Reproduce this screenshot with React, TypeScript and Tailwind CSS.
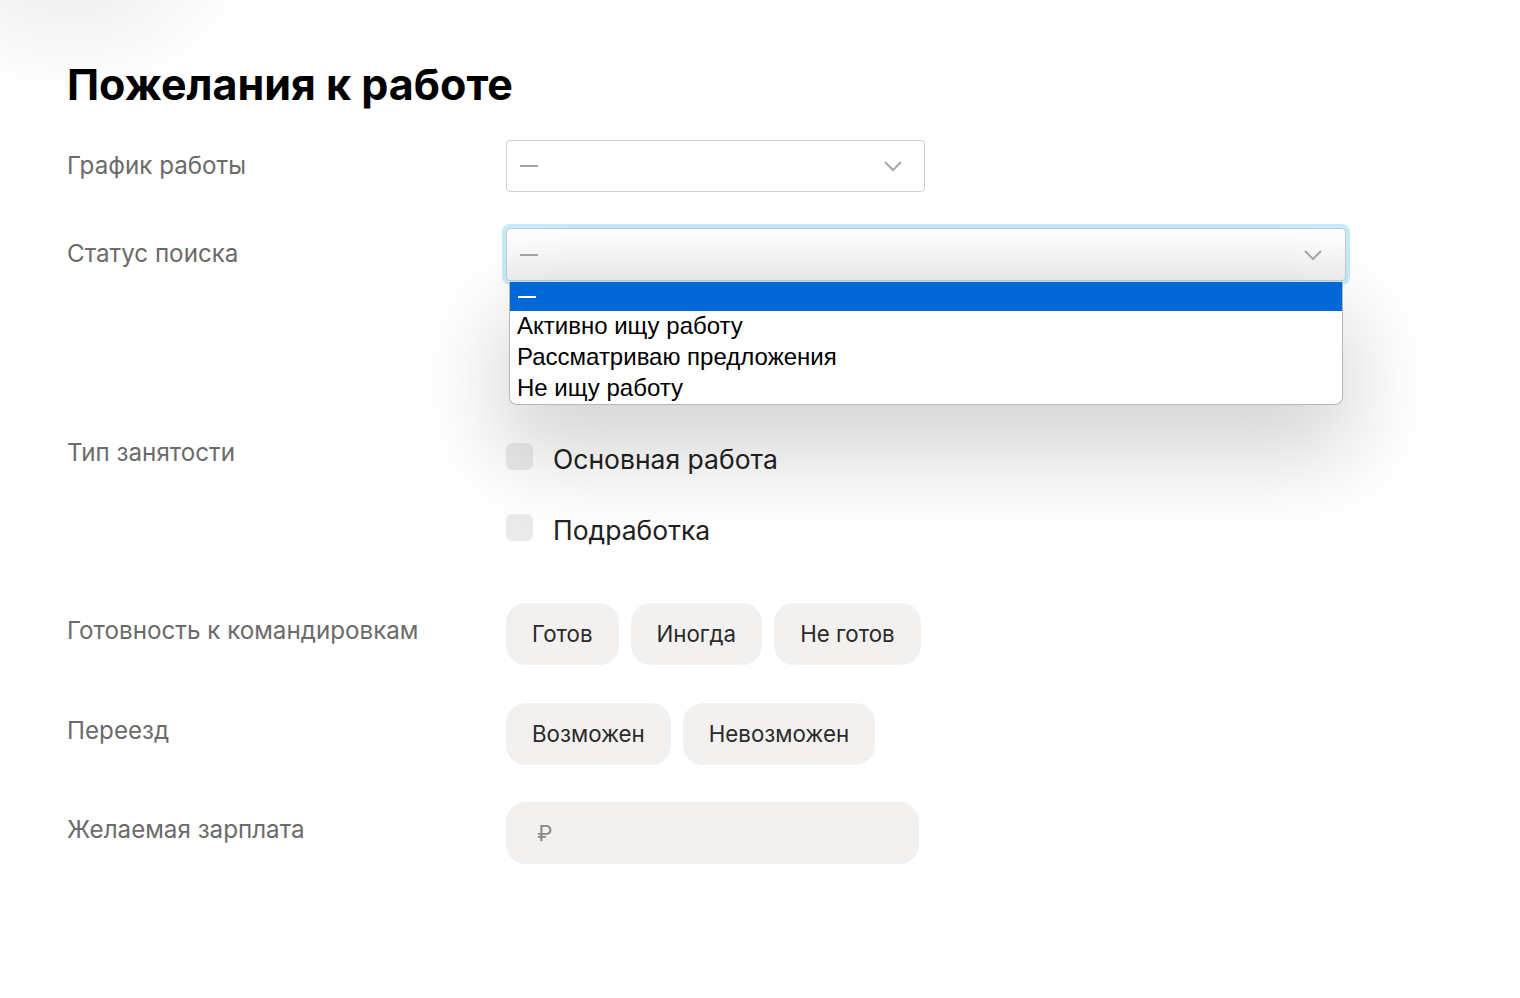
import * as React from 'react'

const labelCls = 'w-[439px] shrink-0 text-[24.2px] text-[#6b6b6b]'
const chipCls =
  'h-[62px] rounded-[20px] bg-[#f2f1f0] px-[26px] text-[22.3px] text-[#2a2a2a] flex items-center'

function Chevron() {
  return (
    <svg width="20" height="12" viewBox="0 0 20 12" fill="none">
      <polyline points="2,2 10,10 18,2" stroke="#a8a8a8" strokeWidth="2" />
    </svg>
  )
}

function Dash({ className }: { className?: string }) {
  return <span className={'block h-[2px] w-[18px] ' + className} />
}

const statusOptions = ['Активно ищу работу', 'Рассматриваю предложения', 'Не ищу работу']

export default function App() {
  return (
    <div
      className="relative min-h-[998px] w-[1520px] overflow-hidden bg-white pl-[67px] pt-[58px]"
      style={{ fontFamily: 'Inter, "Noto Sans", sans-serif' }}
    >
      <div className="pointer-events-none absolute -left-[120px] -top-[160px] h-[260px] w-[380px] rounded-full bg-[radial-gradient(closest-side,rgba(0,0,0,0.07),rgba(0,0,0,0))]" />

      <h1 className="text-[43px] font-bold leading-[52px] text-black">Пожелания к работе</h1>

      {/* График работы */}
      <div className="mt-[30px] flex items-center">
        <div className={labelCls}>График работы</div>
        <div className="flex h-[52px] w-[419px] items-center justify-between rounded-[4px] border border-[#cfcfcf] bg-white pl-[13px] pr-[21px]">
          <Dash className="bg-[#a5a5a5]" />
          <Chevron />
        </div>
      </div>

      {/* Статус поиска */}
      <div className="mt-[36px] flex items-center">
        <div className={labelCls}>Статус поиска</div>
        <div className="relative">
          <div className="-m-[4px] rounded-[8px] bg-[#c4ebfb] p-[4px]">
            <div className="flex h-[53px] w-[840px] items-center justify-between rounded-[4px] border border-[#c8c8c8] bg-gradient-to-b from-white to-[#f0f0f0] pl-[13px] pr-[22px]">
              <Dash className="bg-[#a5a5a5]" />
              <Chevron />
            </div>
          </div>
          <div
            className="absolute left-[3px] top-[54px] z-10 w-[834px] overflow-hidden rounded-b-[8px] border border-t-0 border-[#b5b5b5] bg-white shadow-[0_40px_90px_10px_rgba(0,0,0,0.17)]"
            style={{ fontFamily: '"Liberation Sans", Arial, sans-serif' }}
          >
            <div className="flex h-[29px] items-center bg-[#0067d6] px-[8px]">
              <Dash className="bg-white" />
            </div>
            {statusOptions.map((o) => (
              <div key={o} className="h-[31px] px-[7px] text-[24px] leading-[29px] text-black">
                {o}
              </div>
            ))}
          </div>
        </div>
      </div>

      {/* Тип занятости */}
      <div className="mt-[159px] flex items-start">
        <div className={labelCls + ' -mt-[5px]'}>Тип занятости</div>
        <div className="flex flex-col gap-[38px]">
          {['Основная работа', 'Подработка'].map((t) => (
            <label key={t} className="flex items-center gap-[20px] text-[26.5px] leading-[27px] text-[#222]">
              <span className="h-[27px] w-[27px] rounded-[6px] bg-[#ebebeb]" />
              <span className="mt-[6px]">{t}</span>
            </label>
          ))}
        </div>
      </div>

      {/* Готовность к командировкам */}
      <div className="mt-[59px] flex items-center">
        <div className={labelCls + ' -mt-[6px]'}>Готовность к командировкам</div>
        <div className="flex gap-[12px]">
          <button className={chipCls}>Готов</button>
          <button className={chipCls}>Иногда</button>
          <button className={chipCls}>Не готов</button>
        </div>
      </div>

      {/* Переезд */}
      <div className="mt-[38px] flex items-center">
        <div className={labelCls + ' -mt-[6px]'}>Переезд</div>
        <div className="flex gap-[12px]">
          <button className={chipCls + ' px-[24px]'}>Возможен</button>
          <button className={chipCls + ' px-[24px]'}>Невозможен</button>
        </div>
      </div>

      {/* Желаемая зарплата */}
      <div className="mt-[37px] flex items-center">
        <div className={labelCls + ' -mt-[6px]'}>Желаемая зарплата</div>
        <div className="flex h-[62px] w-[413px] items-center rounded-[20px] bg-[#f2f1f0] pl-[31px] text-[22px] text-[#8a8a8a]">
          ₽
        </div>
      </div>
    </div>
  )
}
